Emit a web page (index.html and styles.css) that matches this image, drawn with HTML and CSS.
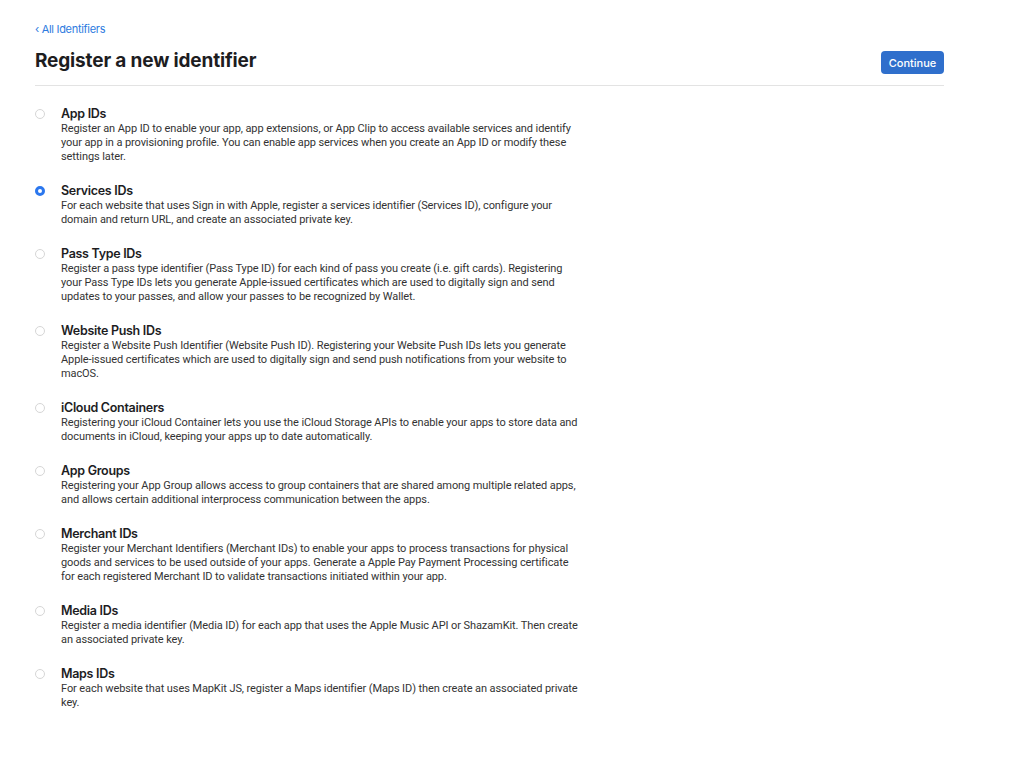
FILE: index.html
```html
<!DOCTYPE html>
<html>
<head>
  <meta charset="UTF-8">
  <title>Register a new identifier</title>
  <link rel="stylesheet" href="styles.css">
</head>
<body>
  <div class="page">
    <a class="back" href="#">&lsaquo; All Identifiers</a>
    <div class="head">
      <h1>Register a new identifier</h1>
      <button class="btn">Continue</button>
    </div>

    <ul class="types">
      <li class="type">
        <span class="radio"></span>
        <div>
          <h2>App IDs</h2>
          <p>Register an App ID to enable your app, app extensions, or App Clip to access available services and identify your app in a provisioning profile. You can enable app services when you create an App ID or modify these settings later.</p>
        </div>
      </li>
      <li class="type">
        <span class="radio on"></span>
        <div>
          <h2>Services IDs</h2>
          <p>For each website that uses Sign in with Apple, register a services identifier (Services ID), configure your domain and return URL, and create an associated private key.</p>
        </div>
      </li>
      <li class="type">
        <span class="radio"></span>
        <div>
          <h2>Pass Type IDs</h2>
          <p>Register a pass type identifier (Pass Type ID) for each kind of pass you create (i.e. gift cards). Registering your Pass Type IDs lets you generate Apple-issued certificates which are used to digitally sign and send updates to your passes, and allow your passes to be recognized by Wallet.</p>
        </div>
      </li>
      <li class="type">
        <span class="radio"></span>
        <div>
          <h2>Website Push IDs</h2>
          <p>Register a Website Push Identifier (Website Push ID). Registering your Website Push IDs lets you generate Apple-issued certificates which are used to digitally sign and send push notifications from your website to macOS.</p>
        </div>
      </li>
      <li class="type">
        <span class="radio"></span>
        <div>
          <h2>iCloud Containers</h2>
          <p>Registering your iCloud Container lets you use the iCloud Storage APIs to enable your apps to store data and documents in iCloud, keeping your apps up to date automatically.</p>
        </div>
      </li>
      <li class="type">
        <span class="radio"></span>
        <div>
          <h2>App Groups</h2>
          <p>Registering your App Group allows access to group containers that are shared among multiple related apps, and allows certain additional interprocess communication between the apps.</p>
        </div>
      </li>
      <li class="type">
        <span class="radio"></span>
        <div>
          <h2>Merchant IDs</h2>
          <p>Register your Merchant Identifiers (Merchant IDs) to enable your apps to process transactions for physical goods and services to be used outside of your apps. Generate a Apple Pay Payment Processing certificate for each registered Merchant ID to validate transactions initiated within your app.</p>
        </div>
      </li>
      <li class="type">
        <span class="radio"></span>
        <div>
          <h2>Media IDs</h2>
          <p>Register a media identifier (Media ID) for each app that uses the Apple Music API or ShazamKit. Then create an associated private key.</p>
        </div>
      </li>
      <li class="type">
        <span class="radio"></span>
        <div>
          <h2>Maps IDs</h2>
          <p>For each website that uses MapKit JS, register a Maps identifier (Maps ID) then create an associated private key.</p>
        </div>
      </li>
    </ul>
  </div>
</body>
</html>
```

FILE: styles.css
```css
body {
  margin: 0;
  font-family: Inter, "Liberation Sans", sans-serif;
  color: #1d1d1f;
  background: #fff;
}
.page {
  width: 909px;
  padding: 22px 0 0 35px;
}
.back {
  display: block;
  font-size: 11px;
  letter-spacing: -0.3px;
  color: #2d7be0;
  text-decoration: none;
  line-height: 14px;
}
.head {
  display: flex;
  justify-content: space-between;
  align-items: flex-start;
  border-bottom: 1px solid #e3e3e3;
  padding: 0 0 11px;
}
h1 {
  margin: 13px 0 0;
  font-size: 19px;
  font-weight: 700;
  letter-spacing: -0.15px;
  line-height: 24px;
}
.btn {
  margin-top: 15px;
  width: 63px;
  height: 23px;
  background: #2f6fcc;
  color: #fff;
  border: none;
  border-radius: 4px;
  font-family: inherit;
  font-size: 11px;
  font-weight: 500;
  cursor: pointer;
}
.types {
  list-style: none;
  margin: 20px 0 0;
  padding: 0;
}
.type {
  display: flex;
  gap: 16px;
  margin-bottom: 19px;
}
.radio {
  flex: none;
  width: 8px;
  height: 8px;
  margin-top: 3px;
  border: 1px solid #d6d6d6;
  border-radius: 50%;
  background: #fff;
}
.radio.on {
  border: 3px solid #2b77ee;
  width: 4px;
  height: 4px;
}
h2 {
  margin: 0;
  font-size: 12.5px;
  font-weight: 600;
  letter-spacing: -0.3px;
  line-height: 16px;
}
p {
  margin: 0;
  width: 520px;
  font-family: Roboto, sans-serif;
  font-size: 11px;
  letter-spacing: -0.09px;
  line-height: 14px;
  color: #333;
}
```
